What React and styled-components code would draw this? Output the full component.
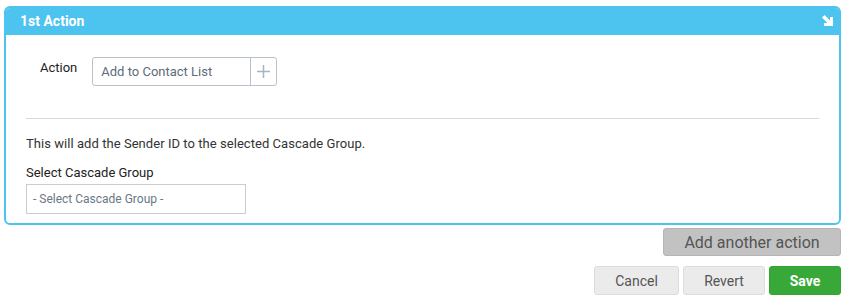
import React from 'react'
import styled, { createGlobalStyle } from 'styled-components'

const GlobalStyle = createGlobalStyle`
    body {
        margin: 0;
        background: #FFFFFF;
        font-family: Roboto, 'Liberation Sans', sans-serif;
    }
`

const Page = styled.div`
    padding: 6px 7px 0 4px;
    display: flex;
    flex-direction: column;
    align-items: flex-end;
`
const Panel = styled.div`
    width: 837px;
    box-sizing: border-box;
    border: 2px solid #4DC3EF;
    border-radius: 6px;
    overflow: hidden;
`
const PanelHeader = styled.div`
    display: flex;
    align-items: center;
    justify-content: space-between;
    height: 28px;
    margin-top: -1px;
    padding: 0 4px 0 14px;
    background: #4DC3EF;
    color: #FFFFFF;
    font-weight: 700;
    font-size: 14px;
`
const PanelBody = styled.div`
    padding: 22px 20px 9px 20px;
`
const ActionRow = styled.div`
    display: flex;
    align-items: flex-start;
    gap: 15px;
    padding-left: 14px;
`
const Label = styled.span`
    font-size: 13px;
    color: #222222;
    font-weight: 400;
    line-height: 20px;
    padding-top: 1px;
`
const InputGroup = styled.div`
    display: flex;
    width: 185px;
    height: 29px;
    box-sizing: border-box;
    border: 1px solid #B7C2CC;
    border-radius: 3px;
`
const InputText = styled.div`
    flex: 1;
    display: flex;
    align-items: center;
    padding-left: 8px;
    font-size: 13px;
    color: #5D6B7A;
    border-right: 1px solid #B7C2CC;
`
const AddBox = styled.div`
    width: 25px;
    display: flex;
    align-items: center;
    justify-content: center;
`
const Divider = styled.hr`
    border: none;
    border-top: 1px solid #D5DBDF;
    margin: 32px 0 0 0;
`
const Note = styled.p`
    margin: 17px 0 0 0;
    font-size: 13px;
    letter-spacing: 0.05px;
    color: #333333;
`
const FieldLabel = styled.div`
    margin-top: 14px;
    font-size: 13px;
    color: #222222;
`
const Select = styled.div`
    margin-top: 4px;
    width: 220px;
    height: 30px;
    box-sizing: border-box;
    border: 1px solid #CCCCCC;
    display: flex;
    align-items: center;
    padding-left: 6px;
    font-size: 12px;
    color: #6A7885;
`
const Button = styled.button`
    box-sizing: border-box;
    height: ${p => p.$big ? 28 : 29}px;
    width: ${p => p.$width}px;
    border: 1px solid ${p => p.$variant === 'save' ? '#33A333' : p.$variant === 'add' ? '#B5B5B5' : '#DCDCDC'};
    border-radius: 3px;
    background: ${p => p.$variant === 'save' ? '#38A939' : p.$variant === 'add' ? '#C2C2C2' : '#EBEBEB'};
    color: ${p => p.$variant === 'save' ? '#FFFFFF' : '#555555'};
    font-family: Roboto, 'Liberation Sans', sans-serif;
    font-size: ${p => p.$big ? 16 : 14}px;
    font-weight: ${p => p.$variant === 'save' ? 700 : 400};
    padding: 0;
    cursor: pointer;
`
const AddRow = styled.div`
    margin-top: 3px;
`
const ButtonRow = styled.div`
    display: flex;
    gap: 4px;
    margin-top: 10px;
`

const App = () => {
  return (
    <Page>
        <GlobalStyle />
        <Panel>
            <PanelHeader>
                <span>1st Action</span>
                <svg width="14" height="14" viewBox="0 0 14 14">
                    <path d="M1 3.5 L3.5 1 L9 6.5 L9 3 L12 3 L12 12 L3 12 L3 9 L6.5 9 Z" fill="#FFFFFF" />
                </svg>
            </PanelHeader>
            <PanelBody>
                <ActionRow>
                    <Label>Action</Label>
                    <InputGroup>
                        <InputText>Add to Contact List</InputText>
                        <AddBox>
                            <svg width="13" height="13" viewBox="0 0 13 13">
                                <path d="M6.5 0 V13 M0 6.5 H13" stroke="#A9B4BE" strokeWidth="1.5" />
                            </svg>
                        </AddBox>
                    </InputGroup>
                </ActionRow>
                <Divider />
                <Note>This will add the Sender ID to the selected Cascade Group.</Note>
                <FieldLabel>Select Cascade Group</FieldLabel>
                <Select>- Select Cascade Group -</Select>
            </PanelBody>
        </Panel>
        <AddRow>
            <Button $variant="add" $big $width={178}>Add another action</Button>
        </AddRow>
        <ButtonRow>
            <Button $width={85}>Cancel</Button>
            <Button $width={82}>Revert</Button>
            <Button $variant="save" $width={72}>Save</Button>
        </ButtonRow>
    </Page>
  )
}

export default App
